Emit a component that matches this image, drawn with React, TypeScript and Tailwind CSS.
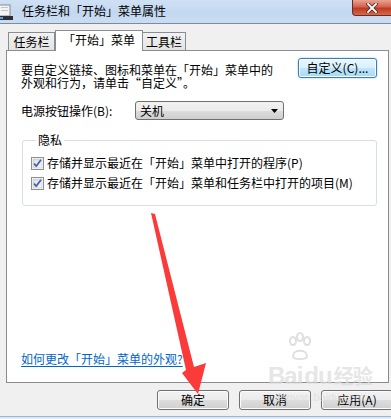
import { useState } from 'react'

const font = { fontFamily: '"Noto Sans CJK SC", "Liberation Sans", sans-serif' }

function TaskbarIcon() {
  return (
    <svg width="15" height="17" viewBox="0 0 15 17" aria-hidden="true">
      <rect x="0" y="1" width="11" height="11" fill="#f4f4f4" stroke="#8a8a8a" />
      <rect x="2" y="3" width="7" height="1" fill="#b9c7d6" />
      <rect x="2" y="6" width="7" height="1" fill="#b9c7d6" />
      <rect x="0" y="12" width="14" height="4" fill="#2b2f35" />
      <rect x="1" y="13" width="3" height="2" fill="#5aa0e0" />
    </svg>
  )
}

function CheckBox({ checked }: { checked: boolean }) {
  return (
    <svg width="13" height="13" viewBox="0 0 13 13" aria-hidden="true" className="shrink-0">
      <defs>
        <linearGradient id="cbg" x1="0" y1="0" x2="1" y2="1">
          <stop offset="0" stopColor="#dcdcdc" />
          <stop offset="1" stopColor="#f8f8f8" />
        </linearGradient>
      </defs>
      <rect x="0.5" y="0.5" width="12" height="12" fill="#fff" stroke="#8e8f8f" />
      <rect x="2" y="2" width="9" height="9" fill="url(#cbg)" stroke="#b4b4b4" strokeWidth="0.5" />
      {checked && (
        <path d="M3 6.5 L5.2 9.2 L10 2.8" fill="none" stroke="#3b5fb7" strokeWidth="1.7" strokeLinejoin="round" />
      )}
    </svg>
  )
}

function DialogButton({ children }: { children: React.ReactNode }) {
  return (
    <button className="h-[20px] w-[72px] shrink-0 rounded-[3px] border border-[#707070] bg-[linear-gradient(180deg,#f2f2f2_0%,#ebebeb_50%,#dddddd_51%,#cfcfcf_100%)] text-[12px] leading-[12px] text-black shadow-[inset_0_0_0_1px_#fcfcfc]">
      {children}
    </button>
  )
}

export default function App() {
  const [recentPrograms, setRecentPrograms] = useState(true)
  const [recentItems, setRecentItems] = useState(true)

  return (
    <div style={font} className="relative h-[419px] w-[391px] overflow-hidden bg-[#f0f0f0] text-[12px] leading-[12px] text-black">
      {/* title bar */}
      <div className="flex h-[24px] items-center border-b border-[#7c8c9e] bg-[linear-gradient(180deg,#cfe0f4_0%,#c3d8f0_55%,#cadcf1_100%)]">
        <div className="ml-[-1px] mt-[2px]">
          <TaskbarIcon />
        </div>
        <span className="ml-[8px] mt-[-2px] text-[12px] text-black">任务栏和「开始」菜单属性</span>
        <div className="ml-auto flex h-[16px] w-[39px] items-center justify-center self-start rounded-bl-[4px] border border-t-0 border-r-0 border-[#6b2a24] bg-[linear-gradient(180deg,#e8a493_0%,#d4634c_45%,#c0391f_55%,#d46a4b_100%)]">
          <svg width="12" height="10" viewBox="0 0 12 10" aria-hidden="true">
            <path d="M2 1 L10 9 M10 1 L2 9" stroke="#4a2a28" strokeWidth="3.4" strokeLinecap="square" />
            <path d="M2 1 L10 9 M10 1 L2 9" stroke="#ffffff" strokeWidth="1.8" strokeLinecap="square" />
          </svg>
        </div>
      </div>

      {/* tabs */}
      <div className="relative z-10 flex items-end pl-[8px] pt-[6px]">
        <div className="flex h-[18px] w-[47px] items-center justify-center border border-b-0 border-[#898c95] bg-[linear-gradient(180deg,#f2f2f2_0%,#e3e3e3_100%)]">
          任务栏
        </div>
        <div className="-mb-px flex h-[21px] w-[88px] items-start justify-center border border-b-0 border-[#898c95] bg-white pt-[3px]">
          「开始」菜单
        </div>
        <div className="flex h-[18px] w-[43px] items-center justify-center border border-b-0 border-l-0 border-[#898c95] bg-[linear-gradient(180deg,#f2f2f2_0%,#e3e3e3_100%)]">
          工具栏
        </div>
      </div>

      {/* tab page */}
      <div className="mx-[6px] flex h-[333px] w-[383px] flex-col border border-[#898c95] bg-white pl-[14px] pr-[11px]">
        <div className="flex items-start justify-between pt-[7px]">
          <p className="mt-[5px] leading-[13px]">
            要自定义链接、图标和菜单在「开始」菜单中的
            <br />
            外观和行为，请单击“自定义”。
          </p>
          <button className="h-[20px] w-[79px] rounded-[3px] border border-[#3c7fb1] bg-[linear-gradient(180deg,#eaf6fd_0%,#d9f0fc_50%,#bee6fd_51%,#a7d9f5_100%)] text-[12px] leading-[12px] shadow-[inset_0_0_0_1px_#ffffff,0_0_2px_#6ec4f0]">
            自定义(C)...
          </button>
        </div>

        <div className="mt-[12px] flex items-center">
          <span className="w-[114px]">电源按钮操作(B):</span>
          <div className="flex h-[19px] w-[149px] items-center justify-between rounded-[3px] border border-[#707070] bg-[linear-gradient(180deg,#f2f2f2_0%,#ebebeb_50%,#dddddd_51%,#cfcfcf_100%)] pl-[4px] pr-[5px]">
            <span>关机</span>
            <svg width="7" height="4" viewBox="0 0 7 4" aria-hidden="true">
              <path d="M0 0 H7 L3.5 4 Z" fill="#000" />
            </svg>
          </div>
        </div>

        <fieldset className="ml-[1px] mt-[14px] h-[72px] rounded-[3px] border border-[#d5dfe5] pl-[8px]">
          <legend className="ml-[5px] px-[2px] leading-[12px]">隐私</legend>
          <label className="mt-[7px] flex h-[20px] items-center gap-[3px]" onClick={() => setRecentPrograms(!recentPrograms)}>
            <CheckBox checked={recentPrograms} />
            <span>存储并显示最近在「开始」菜单中打开的程序(P)</span>
          </label>
          <label className="flex h-[20px] items-center gap-[3px]" onClick={() => setRecentItems(!recentItems)}>
            <CheckBox checked={recentItems} />
            <span>存储并显示最近在「开始」菜单和任务栏中打开的项目(M)</span>
          </label>
        </fieldset>

        <a className="mb-[17px] mt-auto self-start text-[#0066cc] underline underline-offset-2" href="#">
          如何更改「开始」菜单的外观?
        </a>
      </div>

      {/* dialog buttons */}
      <div className="mt-[7px] flex gap-[10px] pl-[157px]">
        <DialogButton>确定</DialogButton>
        <DialogButton>取消</DialogButton>
        <DialogButton>应用(A)</DialogButton>
      </div>

      <div className="absolute bottom-0 left-0 h-[3px] w-full border-t border-[#9fb3cb] bg-[#dbe7f4]" />

      {/* watermark */}
      <div className="pointer-events-none absolute left-[268px] top-[332px] flex flex-col items-center text-[#dcdcdc] opacity-70">
        <svg width="30" height="30" viewBox="0 0 30 30" aria-hidden="true" className="ml-[-40px]">
          <g fill="none" stroke="#d2d2d2" strokeWidth="2">
            <ellipse cx="8" cy="9" rx="3" ry="4" />
            <ellipse cx="15" cy="5" rx="3" ry="4" />
            <ellipse cx="22" cy="9" rx="3" ry="4" />
            <path d="M8 24 C8 17 22 17 22 24 C22 28 8 28 8 24 Z" />
          </g>
        </svg>
        <div className="mt-[2px] flex items-end gap-[2px] text-[24px] font-bold leading-[24px] tracking-[-1px]" style={{ fontFamily: '"Liberation Sans", "Noto Sans CJK SC", sans-serif' }}>
          <span>Bai</span>
          <span>du</span>
          <span className="text-[20px]" style={font}>经验</span>
        </div>
        <span className="mt-[4px] text-[11px] leading-[11px]" style={{ fontFamily: '"Liberation Sans", sans-serif' }}>jingyan.baidu.com</span>
      </div>

      {/* red arrow */}
      <svg className="pointer-events-none absolute left-0 top-0" width="391" height="419" viewBox="0 0 391 419" aria-hidden="true">
        <polygon points="151,213 155,214 194,367 206,363 198,394 182,373 186,370" fill="#fb3a3a" />
      </svg>
    </div>
  )
}
